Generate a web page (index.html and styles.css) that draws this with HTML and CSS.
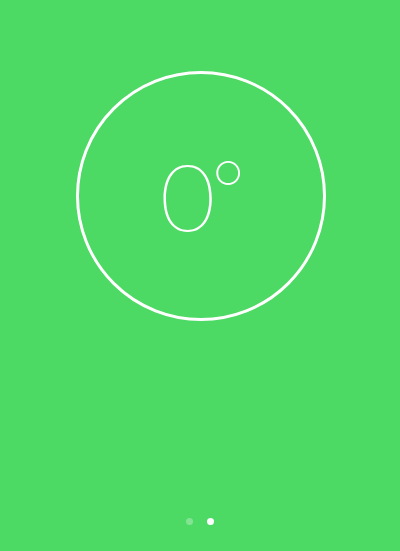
FILE: index.html
```html
<!DOCTYPE html>
<html>
<head>
    <meta name="viewport" content="width=device-width, initial-scale=1">
    <title> Level </title>

    <!-- Styling -->
    <link rel="stylesheet" href="styles.css">
</head>
<body>
    <div class="screen">
        <!-- the level dial -->
        <div class="dial">
            <p class="reading"><span class="num">0</span><span class="deg">°</span></p>
        </div>

        <!-- page control -->
        <div class="dots">
            <span class="dot"></span>
            <span class="dot active"></span>
        </div>
    </div>
</body>
</html>
```

FILE: styles.css
```css
:root {
    --green: #4cd964;
    --snow:  #ffffff;
}

body {
    margin: 0;
    background-color: var( --green );
    font-family: "Inter", "Roboto", sans-serif;
}

.screen {
    height: 551px;
    display: flex;
    flex-direction: column;
    align-items: center;
}

.dial {
    width: 250px;
    height: 250px;
    margin-top: 71px;
    margin-left: 1px;

    box-sizing: border-box;
    border: 3px solid var( --snow );
    border-radius: 50%;

    display: flex;
    align-items: center;
    justify-content: center;
}

.reading {
    margin: 0;
    margin-top: 2px;
    color: var( --snow );
    font-weight: 135;
    line-height: 1;
    white-space: nowrap;
}

.num {
    display: inline-block;
    margin-left: 6px;
    font-size: 90px;
    transform: scaleX( 1.2 );
}

.deg {
    margin-left: -4px;
    font-size: 80px;
    vertical-align: 11px;
}

.dots {
    margin-top: auto;
    padding-bottom: 26px;

    display: flex;
    gap: 14px;
}

.dot {
    width: 7px;
    height: 7px;
    border-radius: 50%;
    background-color: rgba( 255, 255, 255, 0.3 );
}

.dot.active {
    background-color: var( --snow );
}
```
